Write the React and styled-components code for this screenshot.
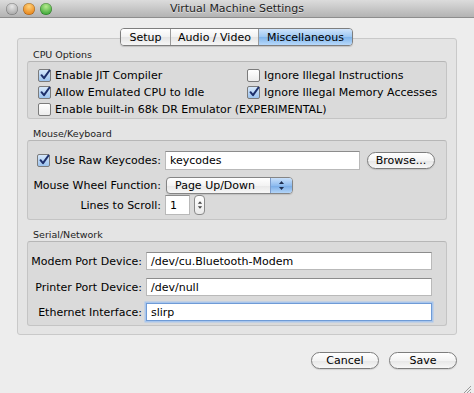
import React from "react";
import styled, { createGlobalStyle } from "styled-components";

const Global = createGlobalStyle`
  html, body { margin: 0; padding: 0; background: #ededed; }
  body { font-family: "DejaVu Sans", "Liberation Sans", sans-serif; color: #000; }
`;

function CheckBox({ checked }) {
  return (
    <Box $checked={checked}>
      {checked && (
        <svg width="12" height="12" viewBox="0 0 12 12">
          <path d="M2.5 6.2 L5 9.2 L10.5 1.5" fill="none" stroke="#1d2f6b" strokeWidth="2" strokeLinecap="round" strokeLinejoin="round" />
        </svg>
      )}
    </Box>
  );
}

function Arrows({ w = 7, h = 11, color = "#222" }) {
  return (
    <svg width={w} height={h} viewBox="0 0 7 11">
      <path d="M3.5 1 L6 4 L1 4 Z" fill={color} />
      <path d="M3.5 10 L6 7 L1 7 Z" fill={color} />
    </svg>
  );
}

export default function App() {
  return (
    <Window>
      <Global />
      <TitleBar>
        <Lights>
          <Light $c1="#e6e6e6" $c2="#a9a9a9" />
          <Light $c1="#ffd27a" $c2="#e8861c" />
          <Light $c1="#b7eb8f" $c2="#3fa83a" />
        </Lights>
        <Title>Virtual Machine Settings</Title>
      </TitleBar>
      <Body>
        <TabStrip>
          <Tab $w="49px">Setup</Tab>
          <Tab $w="88px" $divider>Audio / Video</Tab>
          <Tab $w="94px" $divider $selected>Miscellaneous</Tab>
        </TabStrip>
        <TabBox>
          <Section>
            <GroupLabel>CPU Options</GroupLabel>
            <CpuGroup>
              <Check>
                <CheckBox checked />
                Enable JIT Compiler
              </Check>
              <Check>
                <CheckBox />
                Ignore Illegal Instructions
              </Check>
              <Check>
                <CheckBox checked />
                Allow Emulated CPU to Idle
              </Check>
              <Check>
                <CheckBox checked />
                Ignore Illegal Memory Accesses
              </Check>
              <Check $span>
                <CheckBox />
                Enable built-in 68k DR Emulator (EXPERIMENTAL)
              </Check>
            </CpuGroup>
          </Section>

          <Section>
            <GroupLabel>Mouse/Keyboard</GroupLabel>
            <FormGroup $label="133px" $top="10px" $bottom="4px">
              <FormRow $h="19px">
                <Label>
                  <CheckBox checked />
                  Use Raw Keycodes:
                </Label>
                <Fields>
                  <TextField $w="195px" $h="19px">keycodes</TextField>
                  <PushButton $w="68px" $h="17px">Browse...</PushButton>
                </Fields>
              </FormRow>
              <FormRow $h="18px" $mt="6px">
                <Label>Mouse Wheel Function:</Label>
                <Fields>
                  <Popup>
                    <PopupText>Page Up/Down</PopupText>
                    <PopupArrows>
                      <Arrows color="#1e2e50" />
                    </PopupArrows>
                  </Popup>
                </Fields>
              </FormRow>
              <FormRow $h="20px" $mt="1px">
                <Label>Lines to Scroll:</Label>
                <Fields $gap="4px">
                  <TextField $w="25px" $h="20px">1</TextField>
                  <Stepper>
                    <Arrows w={6} h={10} color="#444" />
                  </Stepper>
                </Fields>
              </FormRow>
            </FormGroup>
          </Section>

          <Section>
            <GroupLabel>Serial/Network</GroupLabel>
            <FormGroup $label="114px" $top="10px" $bottom="4px">
              <FormRow $h="18px">
                <Label>Modem Port Device:</Label>
                <TextField $w="286px" $h="18px">/dev/cu.Bluetooth-Modem</TextField>
              </FormRow>
              <FormRow $h="18px" $mt="8px">
                <Label>Printer Port Device:</Label>
                <TextField $w="286px" $h="18px">/dev/null</TextField>
              </FormRow>
              <FormRow $h="18px" $mt="7px">
                <Label>Ethernet Interface:</Label>
                <TextField $w="286px" $h="18px" $focus>slirp</TextField>
              </FormRow>
            </FormGroup>
          </Section>
        </TabBox>
        <Footer>
          <PushButton $w="68px" $h="17px">Cancel</PushButton>
          <PushButton $w="68px" $h="17px">Save</PushButton>
        </Footer>
      </Body>
      <Grip>
        <svg width="11" height="11" viewBox="0 0 11 11">
          <path d="M10 2 L2 10 M10 5 L5 10 M10 8 L8 10" stroke="#9a9a9a" strokeWidth="1" />
        </svg>
      </Grip>
    </Window>
  );
}

const Window = styled.div`
  position: relative;
  width: 474px;
  height: 393px;
  background: #ededed;
  display: flex;
  flex-direction: column;
  overflow: hidden;
`;

const TitleBar = styled.div`
  height: 17px;
  flex: none;
  position: relative;
  display: flex;
  align-items: center;
  justify-content: center;
  background: linear-gradient(#dcdcdc, #b3b3b3);
  border-bottom: 1px solid #8d8d8d;
`;

const Lights = styled.div`
  position: absolute;
  left: 6px;
  top: 3px;
  display: flex;
  gap: 5px;
`;

const Light = styled.div`
  width: 12px;
  height: 12px;
  border-radius: 50%;
  background: radial-gradient(circle at 50% 30%, ${(p) => p.$c1}, ${(p) => p.$c2} 75%);
  box-shadow: inset 0 0 0 0.5px rgba(0, 0, 0, 0.35);
`;

const Title = styled.div`
  font-size: 11px;
  color: #1f1f1f;
  text-shadow: 0 1px 0 rgba(255, 255, 255, 0.5);
`;

const Body = styled.div`
  padding: 10px 17px 0;
  display: flex;
  flex-direction: column;
`;

const TabStrip = styled.div`
  align-self: center;
  display: flex;
  height: 16px;
  position: relative;
  z-index: 1;
  margin-bottom: -8px;
  margin-left: -1px;
  border: 1px solid #7e7e7e;
  border-radius: 4px;
  overflow: hidden;
  box-shadow: 0 1px 1px rgba(0, 0, 0, 0.15);
`;

const Tab = styled.div`
  box-sizing: border-box;
  width: ${(p) => p.$w};
  display: flex;
  align-items: center;
  justify-content: center;
  font-size: 11px;
  white-space: nowrap;
  color: #000;
  background: ${(p) =>
    p.$selected
      ? "linear-gradient(#cfe4fb, #9cc7f2 50%, #7fb4ea 51%, #b8d9fb)"
      : "linear-gradient(#ffffff, #f1f1f1 50%, #e4e4e4 51%, #f6f6f6)"};
  border-left: ${(p) => (p.$divider ? "1px solid #9a9a9a" : "none")};
`;

const TabBox = styled.div`
  background: #e4e4e4;
  border: 1px solid #c9c9c9;
  border-radius: 3px;
  padding: 9px 9px 8px;
  display: flex;
  flex-direction: column;
`;

const Section = styled.div`
  display: flex;
  flex-direction: column;
  & + & {
    margin-top: 8px;
  }
`;

const GroupLabel = styled.div`
  font-size: 9.5px;
  line-height: 13px;
  height: 13px;
  padding-left: 6px;
  color: #222;
`;

const Group = styled.div`
  background: #dadada;
  border: 1px solid #c4c4c4;
  border-top-color: #b6b6b6;
  border-radius: 3px;
`;

const CpuGroup = styled(Group)`
  display: grid;
  grid-template-columns: 209px 1fr;
  grid-auto-rows: 17px;
  padding: 5px 10px 0;
`;

const Check = styled.div`
  display: flex;
  align-items: center;
  gap: 4px;
  font-size: 11px;
  white-space: nowrap;
  grid-column: ${(p) => (p.$span ? "1 / span 2" : "auto")};
`;

const Box = styled.div`
  width: 11px;
  height: 11px;
  flex: none;
  border: 1px solid #7b7b7b;
  border-radius: 2px;
  background: ${(p) =>
    p.$checked ? "linear-gradient(#d6e8fb, #9cc3ee)" : "linear-gradient(#ffffff, #ececec)"};
  display: flex;
  align-items: center;
  justify-content: center;
  position: relative;
  svg {
    position: absolute;
    left: 0;
    top: -1px;
  }
`;

const FormGroup = styled(Group)`
  display: grid;
  grid-template-columns: ${(p) => p.$label} 1fr;
  column-gap: 4px;
  padding: ${(p) => p.$top} 0 ${(p) => p.$bottom};
`;

const FormRow = styled.div`
  display: contents;
  & > * {
    height: ${(p) => p.$h};
    margin-top: ${(p) => p.$mt || "0"};
  }
`;

const Label = styled.div`
  display: flex;
  align-items: center;
  justify-content: flex-end;
  gap: 4px;
  font-size: 11px;
  white-space: nowrap;
`;

const Fields = styled.div`
  display: flex;
  align-items: center;
  gap: ${(p) => p.$gap || "7px"};
`;

const TextField = styled.div`
  box-sizing: border-box;
  width: ${(p) => p.$w};
  height: ${(p) => p.$h};
  display: flex;
  align-items: center;
  padding-left: 4px;
  font-size: 11px;
  background: #fff;
  border: 1px solid ${(p) => (p.$focus ? "#6f9bd6" : "#b9b9b9")};
  border-top-color: ${(p) => (p.$focus ? "#6f9bd6" : "#8c8c8c")};
  box-shadow: ${(p) => (p.$focus ? "0 0 0 1.5px #a9c6ec" : "none")};
`;

const PushButton = styled.div`
  box-sizing: border-box;
  width: ${(p) => p.$w};
  height: ${(p) => p.$h};
  display: flex;
  align-items: center;
  justify-content: center;
  font-size: 11px;
  border: 1px solid #7d7d7d;
  border-radius: 9px;
  background: linear-gradient(#ffffff, #f3f3f3 50%, #e6e6e6 51%, #f7f7f7);
  box-shadow: 0 1px 1px rgba(0, 0, 0, 0.12);
`;

const Popup = styled.div`
  box-sizing: border-box;
  width: 127px;
  height: 17px;
  margin-left: 1px;
  display: flex;
  border: 1px solid #858585;
  border-radius: 4px;
  overflow: hidden;
  background: linear-gradient(#ffffff, #f3f3f3 50%, #e7e7e7 51%, #f7f7f7);
  box-shadow: 0 1px 1px rgba(0, 0, 0, 0.12);
`;

const PopupText = styled.div`
  flex: 1;
  display: flex;
  align-items: center;
  padding-left: 8px;
  font-size: 11px;
`;

const PopupArrows = styled.div`
  width: 21px;
  display: flex;
  align-items: center;
  justify-content: center;
  border-left: 1px solid #7c9ccc;
  background: linear-gradient(#c9e0fa, #8fbcef 50%, #76aae6 51%, #b4d5f8);
`;

const Stepper = styled.div`
  box-sizing: border-box;
  width: 11px;
  height: 20px;
  display: flex;
  align-items: center;
  justify-content: center;
  border: 1px solid #8a8a8a;
  border-radius: 4px;
  background: linear-gradient(#ffffff, #eaeaea);
`;

const Footer = styled.div`
  display: flex;
  justify-content: flex-end;
  gap: 10px;
  padding-top: 17px;
`;

const Grip = styled.div`
  position: absolute;
  right: 2px;
  bottom: 2px;
  width: 11px;
  height: 11px;
`;
